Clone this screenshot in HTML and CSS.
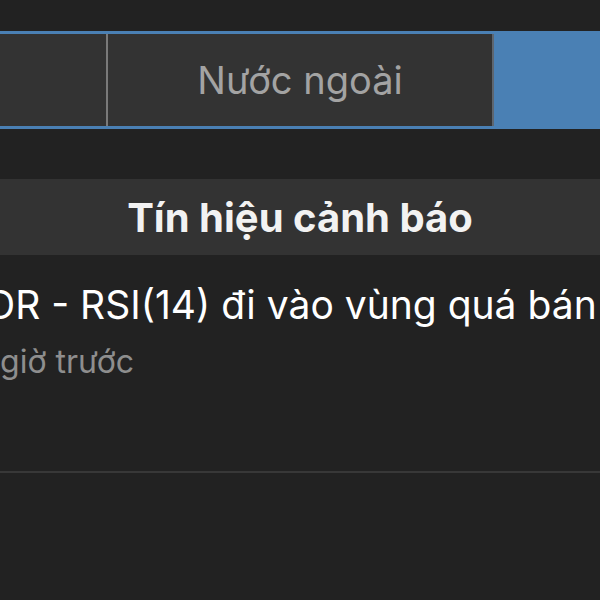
FILE: index.html
```html
<!DOCTYPE html>
<html lang="vi">
<head>
    <meta charset="UTF-8">
    <title>Tín hiệu cảnh báo</title>
    <link rel="stylesheet" href="styles.css">
</head>
<body>
    <div class="screen">
        <div class="segment">
            <div class="segment__tab segment__tab--first"></div>
            <div class="segment__tab segment__tab--second">Nước ngoài</div>
            <div class="segment__tab segment__tab--active"></div>
        </div>

        <div class="section__header">
            <h1 class="section__title">Tín hiệu cảnh báo</h1>
        </div>

        <div class="alert__item">
            <div class="alert__text">HDR - RSI(14) đi vào vùng quá bán</div>
            <div class="alert__time">1 giờ trước</div>
        </div>
    </div>
</body>
</html>
```

FILE: styles.css
```css
* {
    box-sizing: border-box;
}
html, body {
    margin: 0;
    padding: 0;
    font-family: Inter, "Noto Sans", sans-serif;
}
body {
    background: #222222;
    width: 600px;
    height: 600px;
    overflow: hidden;
}
.screen {
    width: 600px;
}
.segment {
    display: flex;
    margin-top: 31px;
    margin-left: -280px;
    width: 1170px;
    padding: 3px 0;
    background: #4a80b4;
}
.segment__tab {
    height: 92px;
    display: flex;
    align-items: center;
    justify-content: center;
    font-size: 38px;
    color: #a3a3a3;
    background: #333333;
}
.segment__tab--first {
    width: 388px;
    border-right: 2px solid #7a7a7a;
}
.segment__tab--second {
    width: 386px;
    border-right: 2px solid #5d6670;
}
.segment__tab--active {
    flex: 1;
    background: #4a80b4;
}
.section__header {
    margin-top: 50px;
    height: 76px;
    background: #333333;
    display: flex;
    align-items: center;
    justify-content: center;
}
.section__title {
    margin: 0;
    font-size: 40px;
    font-weight: 700;
    color: #f2f2f2;
}
.alert__item {
    height: 218px;
    padding-top: 26px;
    margin-left: -42px;
    border-bottom: 2px solid #383838;
}
.alert__text {
    font-size: 39px;
    line-height: 48px;
    color: #ffffff;
    white-space: nowrap;
}
.alert__time {
    margin-top: 14px;
    padding-left: 20px;
    font-size: 32px;
    line-height: 38px;
    color: #8e8e8e;
    white-space: nowrap;
}
```
